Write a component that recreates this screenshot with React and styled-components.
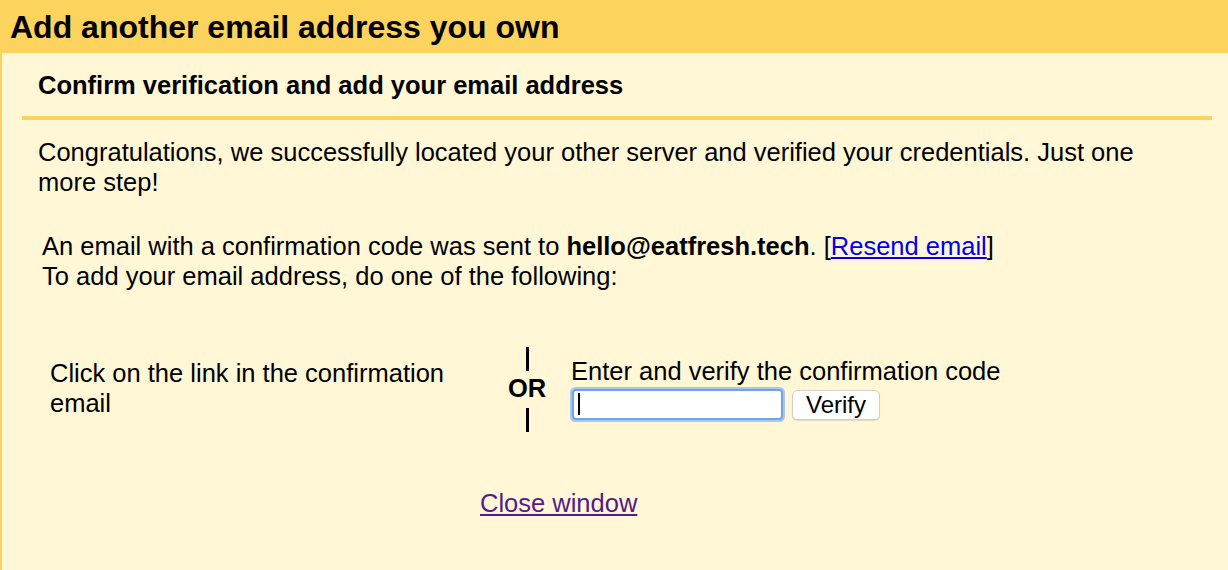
import React from 'react'
import styled, { createGlobalStyle } from 'styled-components'

const GlobalStyle = createGlobalStyle`
  html, body {
    margin: 0;
    padding: 0;
    background: #fff7d6;
  }
  body {
    font-family: "Liberation Sans", Arial, Helvetica, sans-serif;
    color: #000;
  }
`

const yellow = '#fbd35d'

const Page = styled.div`
  min-height: 570px;
  display: flex;
  flex-direction: column;
`

const TitleBar = styled.div`
  height: 53px;
  background: ${yellow};
  display: flex;
  align-items: center;
  padding-left: 10px;
`

const Title = styled.h1`
  margin: 0;
  font-size: 32px;
  font-weight: bold;
  line-height: 1;
  padding-top: 1px;
`

const Panel = styled.div`
  flex: 1;
  border-left: 2px solid ${yellow};
  padding: 0 16px 0 20px;
  font-size: 25.5px;
  line-height: 30px;
`

const SectionHead = styled.h2`
  margin: 0;
  padding: 17px 0 16px 16px;
  font-size: 25.5px;
  line-height: 30px;
  font-weight: bold;
  border-bottom: 4px solid ${yellow};
`

const Para = styled.p`
  margin: 0;
  padding-left: ${p => p.$indent || 16}px;
  padding-right: 60px;
  padding-top: ${p => p.$top || 0}px;
`

const Resend = styled.a`
  color: #0000ee;
  text-decoration: underline;
`

const Choices = styled.div`
  display: flex;
  align-items: center;
  padding: 52px 0 0 28px;
`

const ChoiceText = styled.div`
  width: 420px;
  padding-right: 20px;
`

const OrCell = styled.div`
  width: 74px;
  display: flex;
  flex-direction: column;
  align-items: center;
  font-weight: bold;
  line-height: 30px;
`

const Bar = styled.span`
  display: block;
  width: 3px;
  height: 24px;
  margin: ${p => (p.$bottom ? '5px 0 0' : '4px 0 2px')};
  background: #000;
`

const CodeCell = styled.div`
  padding-left: 7px;
  display: flex;
  flex-direction: column;
`

const CodeRow = styled.div`
  display: flex;
  align-items: center;
  gap: 11px;
  margin-top: 4px;
  padding-left: 3px;
`

const CodeBox = styled.div`
  position: relative;
  width: 207px;
  height: 27px;
  background: #fff;
  border-radius: 2px;
  box-shadow: 0 0 0 2px #6fa3ee, 0 0 0 4px rgba(130, 178, 245, 0.7);

  &::after {
    content: "";
    position: absolute;
    left: 4px;
    top: 2px;
    width: 2px;
    height: 22px;
    background: #000;
  }
`

const CodeInput = styled.input`
  width: 100%;
  height: 100%;
  border: 0;
  outline: none;
  background: transparent;
  padding: 0 6px;
  box-sizing: border-box;
  font: inherit;
  font-size: 22px;
`

const VerifyButton = styled.button`
  width: 88px;
  height: 30px;
  background: #fff;
  border: 1px solid #d4d0c4;
  border-radius: 5px;
  box-shadow: 0 1px 1px rgba(0, 0, 0, 0.12);
  font-family: "Liberation Sans", Arial, sans-serif;
  font-size: 24px;
  color: #000;
  padding: 0;
  line-height: 1;
`

const CloseRow = styled.div`
  padding: 56px 0 0 458px;
`

const CloseLink = styled.a`
  color: #551a8b;
  text-decoration: underline;
`

export default function App() {
  return (
    <>
      <GlobalStyle />
      <Page>
        <TitleBar>
          <Title>Add another email address you own</Title>
        </TitleBar>
        <Panel>
          <SectionHead>Confirm verification and add your email address</SectionHead>
          <Para $top={17}>
            Congratulations, we successfully located your other server and verified your credentials. Just one more step!
          </Para>
          <Para $indent={20} $top={34}>
            An email with a confirmation code was sent to <b>hello@eatfresh.tech</b>. [<Resend href="#">Resend email</Resend>]
            <br />
            To add your email address, do one of the following:
          </Para>
          <Choices>
            <ChoiceText>Click on the link in the confirmation email</ChoiceText>
            <OrCell>
              <Bar />
              OR
              <Bar $bottom />
            </OrCell>
            <CodeCell>
              <div>Enter and verify the confirmation code</div>
              <CodeRow>
                <CodeBox>
                  <CodeInput type="text" aria-label="Confirmation code" />
                </CodeBox>
                <VerifyButton type="button">Verify</VerifyButton>
              </CodeRow>
            </CodeCell>
          </Choices>
          <CloseRow>
            <CloseLink href="#">Close window</CloseLink>
          </CloseRow>
        </Panel>
      </Page>
    </>
  )
}
